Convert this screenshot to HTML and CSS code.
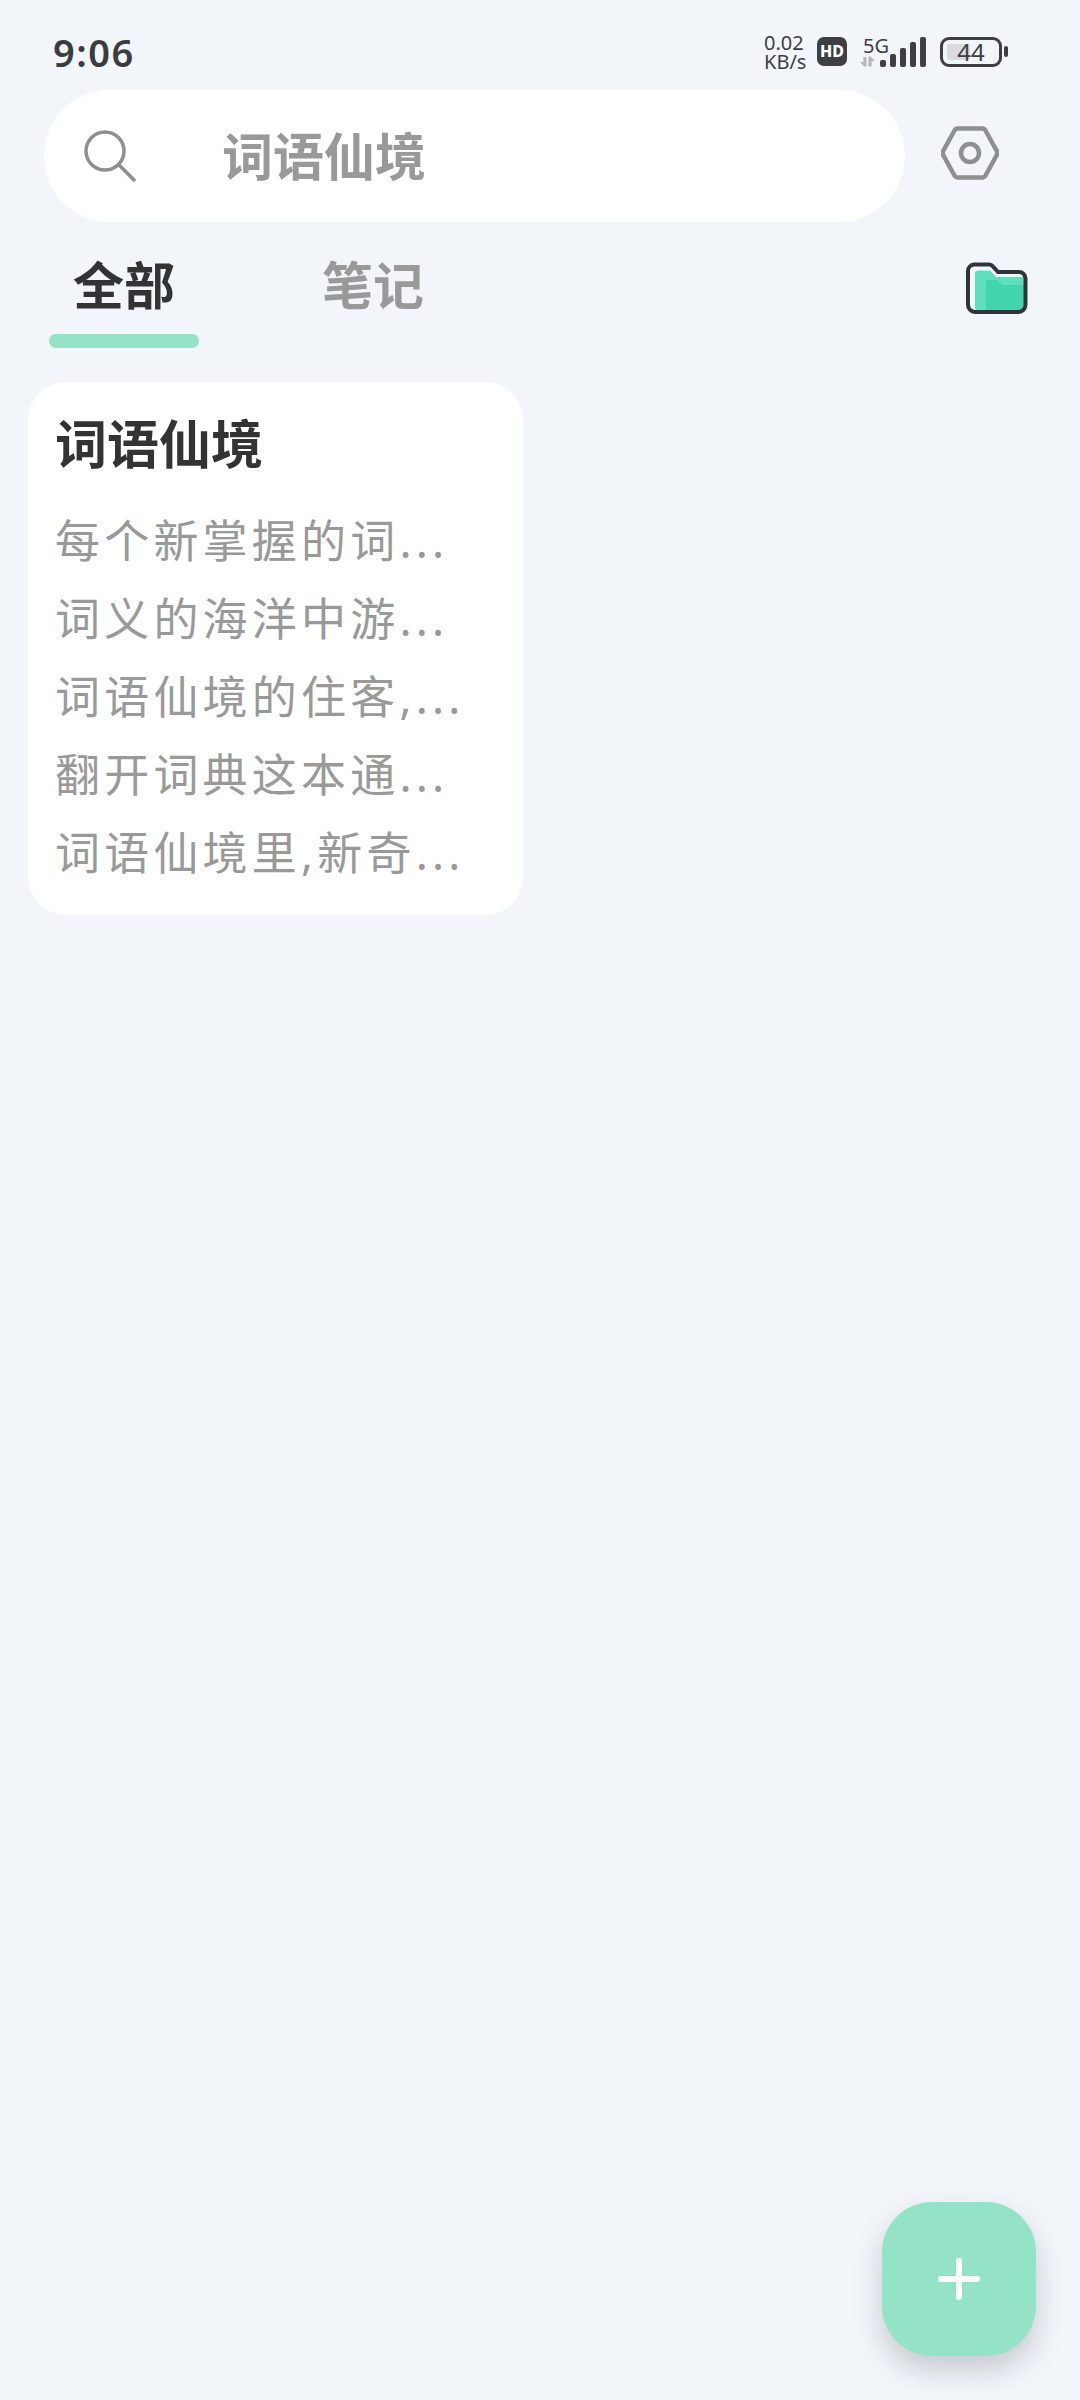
FILE: index.html
```html
<!DOCTYPE html>
<html lang="zh">
<head>
<meta charset="utf-8">
<title>词语仙境</title>
<link rel="stylesheet" href="styles.css">
</head>
<body>
<div class="screen">
  <header class="status">
    <span class="time">9:06</span>
    <div class="status-icons">
      <div class="speed">0.02<br>KB/s</div>
      <span class="hd">HD</span>
      <div class="net">
        <div class="net-left">
          <span class="five-g">5G</span>
          <svg class="arrows" viewBox="0 0 16 12"><path d="M0 6.500L3.500 6.500V1H7V11.500H4.500z M9 0.500L11.500 0.500L16 5.500H12.500V11.500H9z" fill="#b4b8bc"/></svg>
        </div>
        <svg class="bars" viewBox="0 0 46 30"><g fill="#3d3f42"><rect x="0" y="23" width="6" height="7" rx="2"/><rect x="10" y="17" width="6" height="13" rx="2"/><rect x="20" y="11" width="6" height="19" rx="2"/><rect x="30" y="5" width="6" height="25" rx="2"/><rect x="40" y="0" width="6" height="30" rx="2"/></g></svg>
      </div>
      <div class="battery-wrap">
        <div class="battery"><span class="battery-fill"></span><span class="battery-num">44</span></div>
        <span class="battery-nub"></span>
      </div>
    </div>
  </header>

  <div class="search-row">
    <div class="search">
      <svg class="search-icon" viewBox="0 0 52 52"><circle cx="21" cy="21" r="19" fill="none" stroke="#8f8f8f" stroke-width="3.500"/><path d="M35 35L50 50" stroke="#8f8f8f" stroke-width="3.500" stroke-linecap="round"/></svg>
      <span class="search-text">词语仙境</span>
    </div>
    <svg class="gear" viewBox="0 0 58 54"><path d="M17 2.500h24a4 4 0 0 1 3.500 2l10.500 19a6 6 0 0 1 0 7l-10.500 19a4 4 0 0 1-3.500 2H17a4 4 0 0 1-3.500-2L3 30.500a6 6 0 0 1 0-7l10.500-19a4 4 0 0 1 3.500-2z" fill="none" stroke="#8f8f8f" stroke-width="4.500"/><circle cx="29" cy="27" r="9" fill="none" stroke="#8f8f8f" stroke-width="4.500"/></svg>
  </div>

  <nav class="tabs">
    <div class="tab tab-active"><span>全部</span><i class="tab-line"></i></div>
    <div class="tab"><span>笔记</span></div>
    <svg class="folder" viewBox="0 0 62 52">
      <path d="M12 8.500h12l6 6.500h28v30a3 3 0 0 1-3 3H12a3 3 0 0 1-3-3V12a3.500 3.500 0 0 1 3-3.500z" fill="#5fe0bb"/>
      <path d="M23 18h8l6 5h21v22a3 3 0 0 1-3 3H20V21a3 3 0 0 1 3-3z" fill="#43d5ac"/>
      <path d="M8 2.500h15a5 5 0 0 1 4 2l5 5.500h21a6.500 6.500 0 0 1 6.500 6.500v26.500a7 7 0 0 1-7 7H9a7 7 0 0 1-7-7V9a6.500 6.500 0 0 1 6-6.500z" fill="none" stroke="#30343a" stroke-width="4"/>
    </svg>
  </nav>

  <article class="card">
    <h2 class="card-title">词语仙境</h2>
    <div class="card-body">
      <p>每个新掌握的词...</p>
      <p>词义的海洋中游...</p>
      <p>词语仙境的住客,...</p>
      <p>翻开词典这本通...</p>
      <p>词语仙境里,新奇...</p>
    </div>
  </article>

  <button class="fab" aria-label="新建"><svg viewBox="0 0 42 42"><path d="M3 21H39M21 3V39" stroke="#fff" stroke-width="6" stroke-linecap="round"/></svg></button>
</div>
</body>
</html>
```

FILE: styles.css
```css
* { box-sizing: border-box; }
html, body { margin: 0; padding: 0; }
body {
  background: #f2f5fa;
  font-family: "Noto Sans", "Noto Sans CJK SC", sans-serif;
  color: #333;
}
.screen {
  position: relative;
  width: 1080px;
  height: 2400px;
  overflow: hidden;
}

/* status bar */
.status {
  display: flex;
  justify-content: space-between;
  align-items: center;
  height: 90px;
  padding: 13px 72px 0 53px;
}
.time { font-size: 38px; font-weight: 600; line-height: 1; letter-spacing: 1.500px; color: #3a3c3f; }
.status-icons { display: flex; align-items: center; color: #3d3f42; }
.speed { font-size: 20px; line-height: 19px; width: 53px; }
.hd {
  width: 30px; height: 29px;
  border-radius: 7px; background: #3d3f42; color: #fff;
  font-size: 16px; font-weight: 800; line-height: 29px; text-align: center;
}
.net { display: flex; align-items: flex-end; margin-left: 13px; height: 31px; }
.net-left { display: flex; flex-direction: column; width: 20px; }
.five-g { margin-left: 3px; font-size: 20px; line-height: 19px; white-space: nowrap; }
.arrows { width: 15px; height: 11px; margin-top: 1px; }
.bars { width: 46px; height: 30px; }
.battery-wrap { display: flex; align-items: center; margin-left: 14px; }
.battery {
  position: relative;
  width: 62px; height: 30px;
  border: 3px solid #3d3f42; border-radius: 9px;
  display: flex; align-items: center; justify-content: center;
}
.battery-fill {
  position: absolute; left: 4px; top: 4px; bottom: 4px; width: 23px;
  background: #d9dbde; border-radius: 3px;
}
.battery-num { position: relative; font-size: 24px; line-height: 1; color: #3d3f42; }
.battery-nub { width: 4px; height: 11px; margin-left: 2px; background: #3d3f42; border-radius: 2px; }

/* search */
.search-row { display: flex; align-items: flex-start; height: 132px; padding-left: 44px; }
.search {
  display: flex; align-items: center;
  width: 861px; height: 132px;
  padding-left: 40px;
  background: #fff; border-radius: 66px;
}
.search-icon { width: 52px; height: 52px; flex: none; }
.search-text { margin-left: 86px; font-size: 51px; font-weight: 700; line-height: 1; color: #999; }
.gear { width: 58px; height: 54px; margin: 36px 0 0 36px; flex: none; }

/* tabs */
.tabs { display: flex; align-items: flex-start; height: 160px; padding: 30px 52px 0 49px; }
.tab { display: flex; flex-direction: column; align-items: center; width: 150px; color: #999; font-size: 51px; font-weight: 700; line-height: 66px; }
.tab + .tab { margin-left: 99px; }
.tab-active { color: #333; }
.tab-line { display: block; width: 150px; height: 14px; margin-top: 16px; border-radius: 7px; background: #94e3c7; }
.folder { width: 62px; height: 52px; margin: 10px 0 0 auto; flex: none; }

/* card */
.card {
  width: 495px; margin-left: 28px;
  padding: 27px 27px 23px;
  background: #fff; border-radius: 38px;
}
.card-title { margin: 0; font-size: 52px; font-weight: 700; line-height: 70px; color: #333; }
.card-body { margin-top: 23px; font-size: 45px; line-height: 78px; letter-spacing: 4.200px; color: #999; }
.card-body p { margin: 0; white-space: nowrap; }

/* floating action button */
.fab {
  position: absolute; left: 882px; top: 2202px;
  width: 154px; height: 154px; padding: 0;
  display: flex; align-items: center; justify-content: center;
  border: 0; border-radius: 50px;
  background: #94e3c7;
  box-shadow: 0 14px 28px rgba(60, 70, 80, 0.24);
}
.fab svg { width: 42px; height: 42px; }
```
